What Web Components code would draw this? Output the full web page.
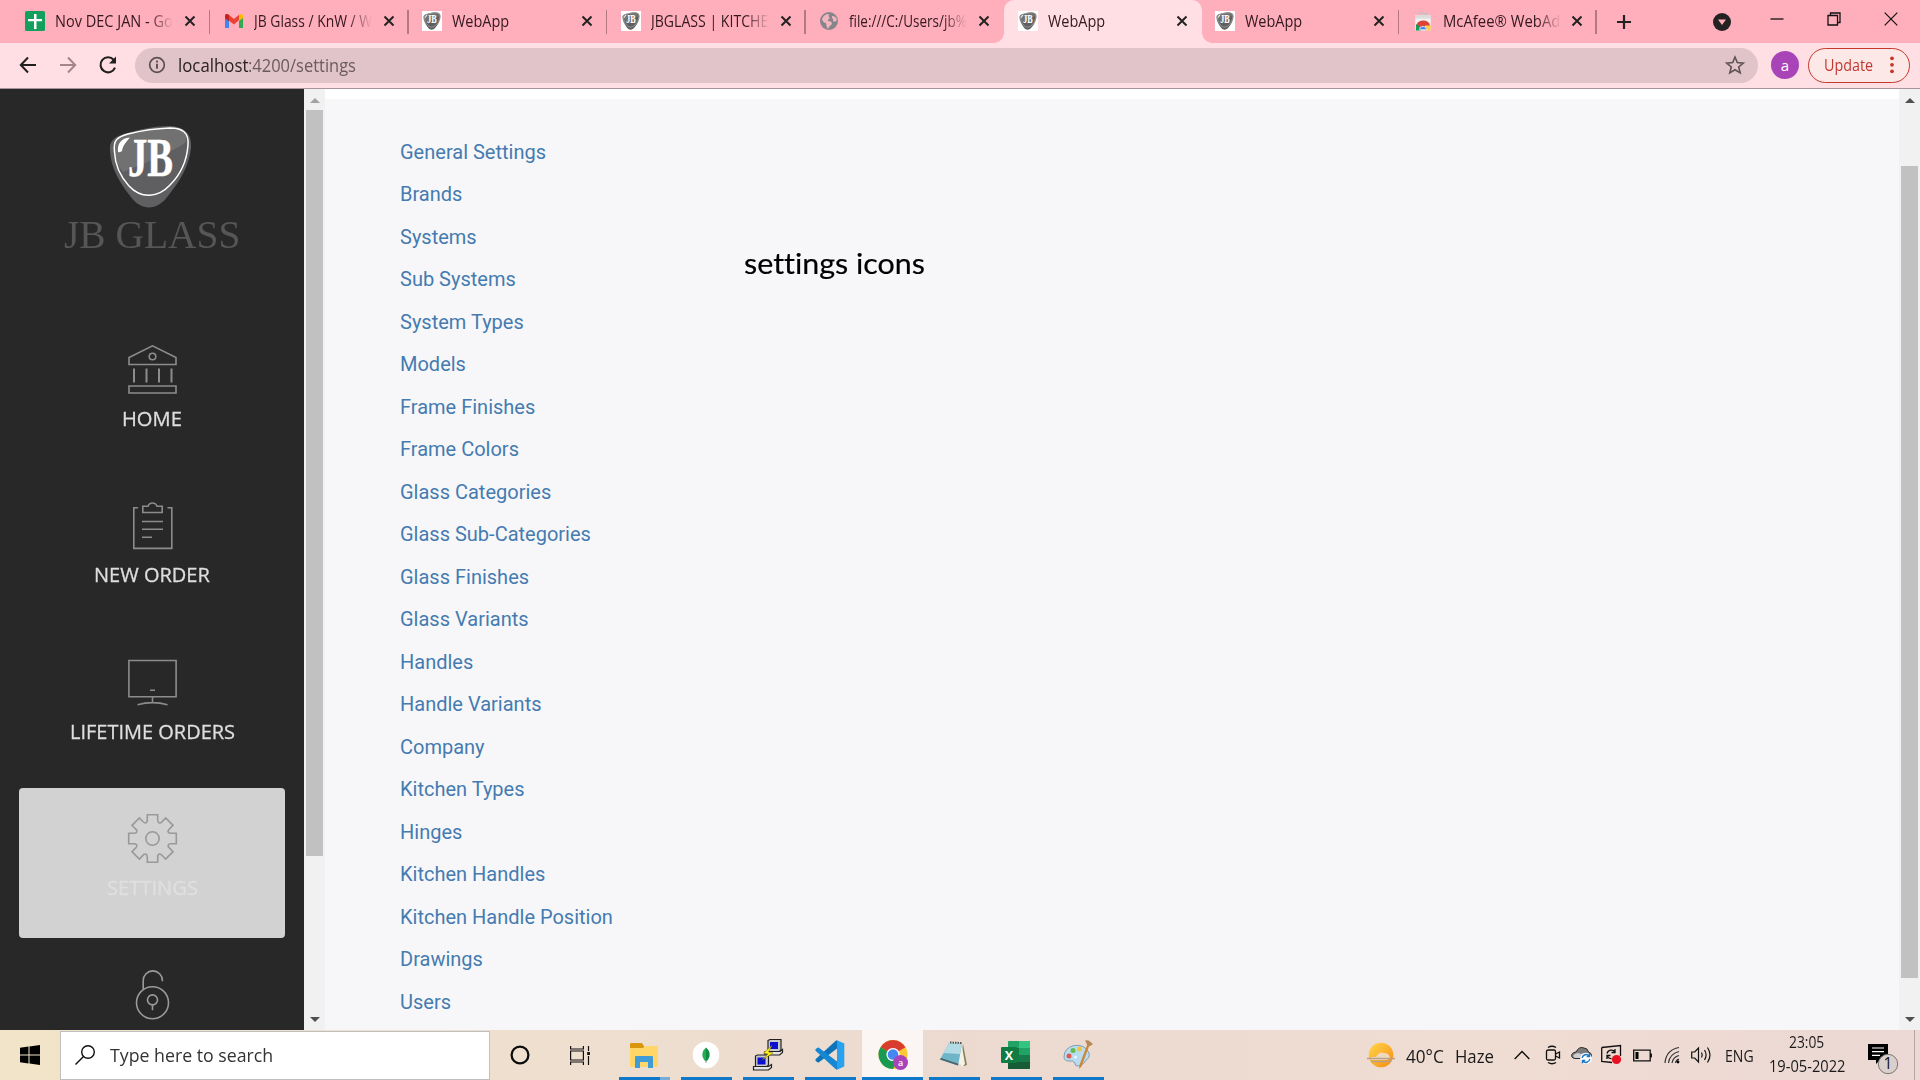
<!DOCTYPE html>
<html lang="en">
<head>
<meta charset="utf-8">
<title>WebApp</title>
<style>
html,body{margin:0;height:100%;overflow:hidden;background:#f7f7f9}
</style>
</head>
<body>
<desk-screen></desk-screen>
<script>
const SHIELD = `<path d="M0 25C-1 15 4 11 14 8C30 3 45 0 60 0C76 1 82 9 81 22C79 40 70 55 58 70C48 84 32 86 21 71C9 56 1 42 0 25Z" fill="#5f5f61"/>
<path d="M4 26C3 14 6 11 18 8C32 5 45 3 60 3C74 3 79 9 75 17C60 27 38 36 13 46C8 40 5 33 4 26Z" fill="#717171"/>
<path d="M4.500 26C3 14 7 11 18 8C32 4.500 45 2.500 60 2C73 2 79 7 78 19C77 33 72 47 60 59C48 72 31 73 19 60C10 50 5 38 4.500 26Z" fill="none" stroke="#fff" stroke-width="1.500"/>
<path d="M8 26C7 18 11 12 20 11.500C17 15 13 19 12 25Q9 27 8 26Z" fill="#fff"/>
<text x="18" y="50" font-family="Liberation Serif,serif" font-weight="700" font-size="54" fill="#fff" stroke="#fff" stroke-width=".500" textLength="45" lengthAdjust="spacingAndGlyphs">JB</text>`;
const gear = () => {
  let d = '';
  for (let i = 0; i < 8; i++) {
    const a = i * Math.PI / 4, r = (x, y) => (x * Math.cos(a) - y * Math.sin(a)).toFixed(2) + ' ' + (x * Math.sin(a) + y * Math.cos(a)).toFixed(2);
    d += (i ? 'L' : 'M') + r(-5.2, -18.5) + 'L' + r(-5.2, -23.8) + 'L' + r(5.2, -23.8) + 'L' + r(5.2, -18.5) + 'C' + r(5.4, -15) + ' ' + r(7.4, -14.8) + ' ' + r(9.4, -16.8);
  }
  return d + 'Z';
};
const CHROME = `<circle cx="15" cy="15" r="14.500" fill="#fcc934"/><path d="M15 15L2.500 7.700A14.500 14.500 0 0 1 27.500 7.700Z" fill="#d93d30"/><path d="M15 15L2.500 7.700A14.500 14.500 0 0 0 15 29.500L21 18.500Z" fill="#199a50"/><circle cx="15" cy="15" r="6.600" fill="#fff"/><circle cx="15" cy="15" r="5.300" fill="#4688f1"/>`;
/* name: [width, height, markup] */
const ICONS = {
  sheets: [20,20,`<rect width="20" height="20" rx="1.500" fill="#14a05c"/><path d="M9 3h2.500v5H17v2.300h-5.500V18H9v-7.700H3V8h6z" fill="#fff"/>`],
  gmail: [20,20,`<path d="M1 17V5l4 3v9z" fill="#4285f4"/><path d="M15 17V8l4-3v12z" fill="#34a853"/><path d="M1 7V4.500Q2 2 4.500 3.500L10 8l5-4.200V9l-5 4.500L5 9.800z" fill="#ea4335"/><path d="M15 3.800Q18 1.800 19 4.500V7l-4 3z" fill="#fbbc04"/><path d="M1 4.500v2.700l4 3V4Q2 2 1 4.500z" fill="#c5221f"/>`],
  shield: [20,20,`<rect width="20" height="20" fill="#fff"/><g transform="translate(1.500 1.200) scale(.21 .215)">${SHIELD}</g>`],
  globe: [20,20,`<circle cx="10" cy="10" r="9" fill="#85868a"/><path d="M3 8Q5 3 10 3Q9 6 11 7Q8 9 9 10Q13 10 13 13Q10 15 9 18Q7 15 7 12Q4 12 3 8ZM13 5Q17 5 18 9Q16 12 14 10Q15 8 13 7Z" fill="#f3b3bf"/>`],
  store: [20,20,`<path d="M2 5h16l-.500 14.500h-15z" fill="#f2f2f2"/><path d="M6.500 4.500V2h7v2.500" fill="none" stroke="#c9c0c2" stroke-width="1.500"/><path d="M2 4h16v3.500H2z" fill="#dcdcdc"/><path d="M3 16Q3.500 9.500 10 9.500t7 5.500l-7 2z" fill="#db4437"/><path d="M3 13.500Q4 13 5.500 14.500l2.500 5H3z" fill="#0f9d58"/><path d="M12 14.500h5.500v5H12z" fill="#ffcd40"/><path d="M6.500 18.800a3.500 3.500 0 0 1 7 0z" fill="#4285f4" stroke="#eee" stroke-width=".800"/>`],
  x: [12,12,`<path d="M1.500 1.500l9 9M10.500 1.500l-9 9" stroke="#222" stroke-width="2"/>`],
  plus: [16,16,`<path d="M8 1v14M1 8h14" stroke="#222" stroke-width="2.200"/>`],
  drop: [18,18,`<circle cx="9" cy="9" r="9" fill="#242122"/><path d="M5 6.500h8L9 12z" fill="#ffaebb"/>`],
  min: [14,20,`<path d="M.500 10h13" stroke="#111" stroke-width="1.300"/>`],
  restore: [14,14,`<path d="M1 3.500h9.500v9.500H1zM3.500 3.500V1H13v9.500h-2.500" fill="none" stroke="#111" stroke-width="1.300"/>`],
  close: [14,14,`<path d="M.700 .700l12.600 12.600M13.300 .700L.700 13.300" stroke="#111" stroke-width="1.200"/>`],
  back: [18,18,`<path d="M17 9H2M9 1.500L1.800 9 9 16.500" fill="none" stroke="#221f20" stroke-width="2"/>`],
  fwd: [18,18,`<path d="M1 9h15M9 1.500L16.200 9 9 16.500" fill="none" stroke="#a3868d" stroke-width="2"/>`],
  reload: [20,20,`<path d="M15.800 5A7.500 7.500 0 1 0 17 12.600" fill="none" stroke="#221f20" stroke-width="2.100"/><path d="M18 1.500v7h-7z" fill="#221f20"/>`],
  info: [18,18,`<circle cx="9" cy="9" r="7.300" fill="none" stroke="#5b5052" stroke-width="1.700"/><path d="M9 7.800v5M9 4.500v2" stroke="#5b5052" stroke-width="1.900"/>`],
  star: [20,20,`<path d="M10 2l2.300 5.600 6 .500-4.600 3.900 1.500 5.900L10 14.700 4.800 17.900l1.500-5.900L1.700 8.100l6-.500z" fill="none" stroke="#5f5356" stroke-width="1.600"/>`],
  dots: [4,18,`<g fill="#c5392c"><circle cx="2" cy="2.300" r="1.900"/><circle cx="2" cy="8.800" r="1.900"/><circle cx="2" cy="15.300" r="1.900"/></g>`],
  logo: [82,82,SHIELD],
  home: [49,49,`<g fill="none" stroke="#8c8c8c" stroke-width="1.600"><path d="M1 19.500v-7L24.500.900 48 12.500v7zM1 41h47v7H1z"/><circle cx="24.500" cy="11.500" r="3.300"/></g><path d="M6 23.500v14M18.500 23.500v14M31 23.500v14M43.500 23.500v14" stroke="#8c8c8c" stroke-width="2"/>`],
  order: [49,49,`<g transform="translate(0 -1.200)" fill="none" stroke="#8c8c8c" stroke-width="1.600"><path d="M10 8H5.800v40.600h38V8H39.500M14.800 12.700V6.500H20A4.700 4.700 0 0 1 29 6.500h5.200v6.200zM14 21.700h21M14 29.500h21M14 37.500h10"/></g>`],
  monitor: [49,49,`<g fill="none" stroke="#8c8c8c" stroke-width="1.600"><path d="M.900 2.500h47.200v36.300H.900zM24.500 39v5M22 32.300h5M9.500 46.800Q24.500 42.500 39.500 46.800"/></g>`],
  gear: [49,49,`<g transform="translate(24.500 24.500)" fill="none" stroke="#999" stroke-width="1.600"><path d="${gear()}"/><circle r="6.700"/></g>`],
  lock: [49,49,`<g transform="translate(0 -.800)" fill="none" stroke="#9a9a9a" stroke-width="1.600"><circle cx="24.500" cy="32.500" r="16"/><path d="M15.200 19V10.300A9.600 9.600 0 0 1 34.400 10.300V11"/><circle cx="24.500" cy="29.700" r="5"/><path d="M24.500 34.700V40"/></g>`],
  win: [20,20,`<path d="M0 2.800L8.500 1.600V9.500H0zM9.500 1.400L20 0V9.500H9.500zM0 10.500H8.500V18.400L0 17.200zM9.500 10.500H20V20L9.500 18.600z"/>`],
  search: [20,20,`<circle cx="13" cy="7" r="6.300" fill="none" stroke="#111" stroke-width="1.400"/><path d="M8.500 11.500L.500 19.500" stroke="#111" stroke-width="1.500"/>`],
  cortana: [20,20,`<circle cx="10" cy="10" r="8.400" fill="none" stroke="#0c0c0c" stroke-width="2.300"/>`],
  task: [20,20,`<g fill="none" stroke="#111" stroke-width="1.200"><path d="M.600 1v3h12.800V1M.600 6h12.800v9H.600zM.600 20v-3h12.800V20M18.500 1v5M18.500 11v9"/></g><rect x="17.200" y="7" width="2.700" height="3" fill="#111"/>`],
  explorer: [28,26,`<path d="M0 2Q0 1 1 1h11l2 3v2H0z" fill="#d9960f"/><path d="M0 6h13l2-2h12q1 0 1 1v19q0 1-1 1H1q-1 0-1-1z" fill="#ffd667"/><path d="M5 26V15q0-1 1-1h16q1 0 1 1v11h-5v-6h-8v6z" fill="#409bd6"/>`],
  mongo: [28,28,`<circle cx="14" cy="14" r="13.300" fill="#fff"/><path d="M14 6.500q4.500 4 3.500 9-1 3.500-3.500 5z" fill="#0f8b43"/><path d="M14 6.500q-4.500 4-3.500 9 1 3.500 3.500 5z" fill="#23ac54"/><path d="M14 19v3" stroke="#7a8" />`],
  putty: [30,32,`<g stroke="#222" stroke-width="1.200"><path d="M15 1.500l2-1h11V11l-1.500 1.500H15z" fill="#c9c9c9"/><path d="M12 12.500h15l2.500-2v3l-3 2.500H12z" fill="#e4e4e4"/><path d="M2.500 17l2-1H15.500V26L14 27.500H2.500z" fill="#c9c9c9"/><path d="M.500 27.500h15l3-2v3l-3 2.500H.500z" fill="#e4e4e4"/></g><path d="M17 3h8v7h-8zM4.500 18.500h8v7h-8z" fill="#0a0fd0"/><path d="M19 6.500L10.500 14l4.500 1-6 6 11-7-4.500-1z" fill="#ffee18" stroke="#7a7000" stroke-width=".500"/>`],
  vscode: [30,30,`<path d="M22 .300L29.300 3.500v23L22 29.700z" fill="#27a2ee"/><path d="M22 .300V8.500L4 22.300Q3 22.800 2 22L.700 20.700Q0 19.800.800 19L20.500 1Q21.200.400 22 .300z" fill="#0e73b9"/><path d="M22 29.700V21.500L4 7.700Q3 7.200 2 8L.700 9.300Q0 10.200.800 11L20.500 29Q21.200 29.600 22 29.700z" fill="#1688d3"/>`],
  chrome: [30,32,`<g transform="translate(0 .500)">${CHROME}</g><circle cx="22.500" cy="23.500" r="7.500" fill="#a944b8"/><text x="22.500" y="27" text-anchor="middle" font-family="Open Sans,sans-serif" font-size="9" font-weight="600" fill="#fff">a</text>`],
  notepad: [30,30,`<path d="M24 4l4 21-3 1-4-1z" fill="#8b8257"/><path d="M22.500 4l3.500 20-3 3-3-4z" fill="#f4f3e7"/><path d="M10 3l13 .500L19 25.500 1 19.500z" fill="#6fb5c9"/><path d="M10 3l13 .500L21 14 4.500 13z" fill="#b3dbe5"/><path d="M1 19.500l18 6 .300-1.800L2 18z" fill="#48656c"/><path d="M11 2.500l12 .500" stroke="#555" stroke-width="2" stroke-dasharray="1.500 1"/>`],
  excel: [30,30,`<rect x="7" y="1" width="22" height="28" rx="1" fill="#21a366"/><path d="M18 1h10q1 0 1 1v6H18z" fill="#33c481"/><path d="M7 8h11v7H7z" fill="#107c41"/><path d="M7 15h11v14H8q-1 0-1-1zM18 15h11v7H18z" fill="#18794a"/><path d="M7 22h22v6q0 1-1 1H8q-1 0-1-1z" fill="#185c37"/><rect y="7" width="16" height="16" rx="1" fill="#107c41"/><text x="8" y="19.500" text-anchor="middle" font-family="Open Sans,sans-serif" font-size="12.500" font-weight="700" fill="#fff">X</text>`],
  paint: [30,30,`<path d="M1 17Q1 8 11 5.500Q22 4 26 13Q27 18 23 20Q20 26 14 26Q12 26 12 23Q10 20 6 21Q1 21 1 17Z" fill="#b8dcf0" stroke="#7f9fb5"/><circle cx="6" cy="16" r="2.500" fill="#e2574f"/><circle cx="10" cy="10.500" r="2.500" fill="#6ab94c"/><circle cx="16.500" cy="9" r="2.500" fill="#f5c43e"/><circle cx="12.500" cy="17" r="1.500" fill="#eef7fc"/><path d="M26.500 5l-8 21.500-2.500 2.500.500-4L24.500 4z" fill="#cf8430"/><path d="M22 .500q3-1 5 1l3 2.500q-2 2-5 2.500z" fill="#b58a59"/>`],
  sun: [30,28,`<defs><linearGradient id="s" x2="1" y2="1"><stop stop-color="#ffd84a"/><stop offset="1" stop-color="#f78b14"/></linearGradient></defs><circle cx="15" cy="14" r="12.300" fill="url(#s)"/><path d="M3 18q3-3 7-2 3-6 8-4 5 0 6 5l-3 2H6z" fill="#efd9bd"/><path d="M1 17.500h28M5 20.500h20" stroke="#b8a18b" stroke-width="1.300"/>`],
  chev: [16,10,`<path d="M.700 9L8 1.500 15.300 9" fill="none" stroke="#111" stroke-width="1.400"/>`],
  meet: [16,20,`<g fill="none" stroke="#111" stroke-width="1.300"><rect x="1.500" y="5" width="9" height="10" rx="1.500"/><path d="M10.500 9l4-2v6l-4-2M3 2.500Q7 0 11 2.500M3 17.500Q7 20 11 17.500"/></g>`],
  cloud: [22,20,`<path d="M4 13.500Q0 13 .800 9.500 2 7 5 7 8 1 13 3q3.500 0 4.500 4 3 1 3 3.500 0 3-3.500 3z" fill="#7b7b7b" stroke="#2a2a2a"/><path d="M1.800 11q4-5 8-2 4-2 9 1l-1 3H4z" fill="#cfcfcf"/><circle cx="15" cy="13.500" r="5.800" fill="#fff"/><path d="M11.200 13a4 4 0 0 1 7-2M18.800 14a4 4 0 0 1-7 2M18.500 8.700v2.800h-2.800M11.500 18.300v-2.800h2.800" fill="none" stroke="#1976c9" stroke-width="1.400"/>`],
  sync: [22,22,`<path d="M.700 3.500L19.500 1.500V12M11 18.500L.700 17.500V3.500" fill="none" stroke="#111" stroke-width="1.300"/><path d="M6 9.500a4.500 4.500 0 0 1 8-1.500M14 5v3.500h-3.500M6 15v-3.500h3.500M6.500 12.500a4 4 0 0 0 4 2" fill="none" stroke="#111" stroke-width="1.300"/><circle cx="15.500" cy="15.500" r="4.600" fill="#e81123"/>`],
  batt: [19,13,`<path d="M.700 1.200h16.500v10.600H.700zM18.300 4.500v4" fill="none" stroke="#111" stroke-width="1.300"/><path d="M2.500 3h3v7h-3z"/>`],
  wifi: [17,18,`<g fill="none" stroke="#333" stroke-width="1.200"><path d="M1 17Q2 4 15 1.500M4.500 17Q5.500 8 15 5.500M8 17Q9 11 15 9.500M11.500 17Q12 14 15 13.200"/></g><circle cx="14" cy="16" r="1.400"/>`],
  vol: [21,18,`<g fill="none" stroke="#111" stroke-width="1.200"><path d="M.700 6h3L7.500 2v14l-3.800-4h-3zM10.500 6.500q1.500 2.500 0 5M13.500 4q3.200 5 0 10M16.500 1.500q5 7.500 0 15"/></g>`],
  notif: [31,32,`<path d="M0 1h20v16h-8l-4 4v-4H0z"/><path d="M4 5h12M4 8.700h12M4 12.400h8" stroke="#fff" stroke-width="1.200"/><circle cx="20" cy="21" r="9.700" fill="#d9cfcc" stroke="#7a7575"/><text x="20" y="26.300" text-anchor="middle" font-family="Open Sans,sans-serif" font-size="15.500" fill="#111">1</text>`],
  up: [10,5,`<path d="M0 5L5 0l5 5z" fill="currentColor"/>`],
  down: [10,5,`<path d="M0 0h10L5 5z" fill="currentColor"/>`]
};
const define = (name, html, after) => customElements.define(name, class extends HTMLElement {
  connectedCallback() {
    if (this.shadowRoot) return;
    const t = document.createElement('template');
    t.innerHTML = typeof html === 'function' ? html(this) : html;
    this.attachShadow({ mode: 'open' }).append(t.content.cloneNode(true));
    if (after) after(this);
  }
});

define('ui-icon', el => {
  const [w, h, m] = ICONS[el.getAttribute('name')];
  return `<style>:host{display:block;flex:none;width:${w}px;height:${h}px}svg{display:block;overflow:visible}</style><svg width="${w}" height="${h}" viewBox="0 0 ${w} ${h}">${m}</svg>`;
});

/* A single line of text condensed or stretched to the width in its w attribute. */
define('fit-text', el => `<style>:host{display:block;flex:none;width:${el.getAttribute('w')}px;white-space:nowrap}span{display:inline-block;transform-origin:0 50%}</style><span>${el.getAttribute('text')}</span>`,
  el => {
    const s = el.shadowRoot.querySelector('span');
    s.style.transform = `scaleX(${(+el.getAttribute('w') / s.offsetWidth).toFixed(4)})`;
  });

define('browser-tab', el => {
  const on = el.hasAttribute('active');
  return `<style>
:host{display:flex;flex:none;align-items:center;box-sizing:border-box;width:198.500px;height:43px;padding:0 0 1px 13.500px;position:relative;font:16px/24px "Open Sans",sans-serif;color:#33191f;${on ? 'background:#ffdfe4;border-radius:10px 10px 0 0;z-index:1;' : ''}}
:host([short]){width:197.500px}
.t{flex:none;width:118px;margin-left:10px;overflow:hidden;${el.hasAttribute('cut') ? '-webkit-mask-image:linear-gradient(90deg,#000 80%,transparent);mask-image:linear-gradient(90deg,#000 80%,transparent)' : ''}}
.x{margin-left:11px}
:host([short]) .x{margin-left:10px}
${on ? `:host::before,:host::after{content:"";position:absolute;bottom:0;width:10px;height:10px}
:host::before{left:-10px;background:radial-gradient(circle at 0 0,transparent 9.500px,#ffdfe4 10px)}
:host::after{right:-10px;background:radial-gradient(circle at 100% 0,transparent 9.500px,#ffdfe4 10px)}` : ''}
${el.hasAttribute('sep') ? `:host::after{content:"";position:absolute;right:0;top:10px;width:1.500px;height:24px;background:#b27983}` : ''}
</style><ui-icon name="${el.getAttribute('icon')}"></ui-icon><div class="t"><fit-text w="${el.getAttribute('w')}" text="${el.getAttribute('label')}"></fit-text></div><ui-icon class="x" name="x"></ui-icon>`;
});

define('tab-strip', `<style>:host{display:flex;height:43px;flex:none;align-items:center;background:#ffaebb;padding-left:11.500px;box-sizing:border-box}
.plus{margin-left:19.500px}.drop{margin-left:81px}.min{margin-left:39px;margin-bottom:5px}.res,.cl{margin:0 0 5px 43px}</style>
<browser-tab sep cut icon="sheets" label="Nov DEC JAN - Go" w="118"></browser-tab>
<browser-tab sep cut icon="gmail" label="JB Glass / KnW / W" w="118"></browser-tab>
<browser-tab sep icon="shield" label="WebApp" w="57"></browser-tab>
<browser-tab sep cut icon="shield" label="JBGLASS | KITCHE" w="117"></browser-tab>
<browser-tab cut icon="globe" label="file:///C:/Users/jb%" w="118"></browser-tab>
<browser-tab active short icon="shield" label="WebApp" w="57"></browser-tab>
<browser-tab sep short icon="shield" label="WebApp" w="57"></browser-tab>
<browser-tab sep short cut icon="store" label="McAfee® WebAd" w="117"></browser-tab>
<ui-icon class="plus" name="plus"></ui-icon><ui-icon class="drop" name="drop"></ui-icon><ui-icon class="min" name="min"></ui-icon><ui-icon class="res" name="restore"></ui-icon><ui-icon class="cl" name="close"></ui-icon>`);

define('tool-bar', `<style>:host{display:flex;flex:none;align-items:center;height:46px;box-sizing:border-box;background:#ffdfe4;border-bottom:1px solid #a8959a;padding:0 10px 1px 19px;font-family:"Open Sans",sans-serif}
.f{margin-left:22px}.r{margin-left:21px}
.omni{display:flex;align-items:center;box-sizing:border-box;width:1623px;height:35px;margin-left:17px;border-radius:18px;background:#e0c4c9;padding:0 13px;font-size:18px;line-height:26px}
.u1{margin-left:12px;color:#2b2224}.u2{color:#6b5b5e}.star{margin-left:auto}
.av{display:flex;align-items:center;justify-content:center;width:28px;height:28px;border-radius:50%;background:#a944b8;color:#fff;margin-left:13px;font-size:15px;line-height:20px}
.up{display:flex;align-items:center;box-sizing:border-box;width:102px;height:35px;margin-left:9px;border:1.500px solid #c5392c;border-radius:18px;background:#fde8e8;color:#c0392f;padding:0 14px 0 15px;font-size:15.500px;line-height:20px}
.up fit-text{margin-bottom:1px}
.d{margin-left:17px}</style>
<ui-icon name="back"></ui-icon><ui-icon class="f" name="fwd"></ui-icon><ui-icon class="r" name="reload"></ui-icon>
<div class="omni"><ui-icon name="info"></ui-icon><fit-text class="u1" w="70" text="localhost"></fit-text><fit-text class="u2" w="108" text=":4200/settings"></fit-text><ui-icon class="star" name="star"></ui-icon></div>
<div class="av">a</div><div class="up"><fit-text w="49" text="Update"></fit-text><ui-icon class="d" name="dots"></ui-icon></div>`);

define('scroll-bar', el => `<style>:host{display:flex;flex:none;flex-direction:column;align-items:center;box-sizing:border-box;width:21px;padding:9px 0 8px;background:#f1f1f1;color:#505050}
.th{width:17px;background:#c1c1c1;height:${el.getAttribute('size')}px;margin-top:${el.getAttribute('start')}px;margin-bottom:auto}
.u{color:${el.getAttribute('upcolor') || '#505050'}}</style><ui-icon class="u" name="up"></ui-icon><div class="th"></div><ui-icon name="down"></ui-icon>`);

define('nav-item', el => `<style>:host{display:flex;flex:none;flex-direction:column;align-items:center;box-sizing:border-box;height:150px;margin:0 19px 6.400px;padding:26px 0 0 1px;border-radius:4px;font:500 19.500px/26px "Open Sans",sans-serif;color:#dedede;-webkit-text-stroke:.3px}
:host([active]){background:#d2d2d2;color:#dfdfdf}
fit-text{margin:12px 1px 0 0}</style><ui-icon name="${el.getAttribute('icon')}"></ui-icon>${el.hasAttribute('label') ? `<fit-text w="${el.getAttribute('w')}" text="${el.getAttribute('label')}"></fit-text>` : ''}`);

define('side-nav', `<style>:host{display:flex;flex:none;flex-direction:column;width:304px;overflow:hidden;background:#282828}
.brand{display:flex;flex-direction:column;align-items:center;height:230px;box-sizing:border-box;padding-top:37px;flex:none}
.brand ui-icon{margin-right:2px}
.name{font:39px/44px "Liberation Serif",serif;color:#565656;margin:5px 1px 0 0}</style>
<div class="brand"><ui-icon name="logo"></ui-icon><fit-text class="name" w="176" text="JB GLASS"></fit-text></div>
<nav-item icon="home" label="HOME" w="60"></nav-item><nav-item icon="order" label="NEW ORDER" w="116"></nav-item><nav-item icon="monitor" label="LIFETIME ORDERS" w="165"></nav-item><nav-item active icon="gear" label="SETTINGS" w="91"></nav-item><nav-item icon="lock"></nav-item>`);

const LINKS = ['General Settings','Brands','Systems','Sub Systems','System Types','Models','Frame Finishes','Frame Colors','Glass Categories','Glass Sub-Categories','Glass Finishes','Glass Variants','Handles','Handle Variants','Company','Kitchen Types','Hinges','Kitchen Handles','Kitchen Handle Position','Drawings','Users'];
define('settings-page', `<style>:host{display:flex;flex:1;min-width:0;box-sizing:border-box;border-top:10px solid #fff;background:#f7f7f9;padding:32px 0 0 75px;overflow:hidden}
ul{list-style:none;margin:0;padding:0;width:344px;font:20px/42.490px Roboto,sans-serif}
li{height:42.490px}a{color:#457bb0;text-decoration:none}
.note{font:29.500px/36px Lato,sans-serif;font-variant-ligatures:none;color:#000;margin-top:114px;-webkit-text-stroke:.2px}</style>
<ul>${LINKS.map(l => `<li><a>${l}</a></li>`).join('')}</ul><fit-text class="note" w="180.500" text="settings icons"></fit-text>`);

define('task-app', el => `<style>:host{display:flex;flex:none;align-items:center;justify-content:center;box-sizing:border-box;width:51px;height:50px;margin-left:11px;border-bottom:3px solid #0f78c8;padding:2px 1px 0 0}
:host([active]){width:61px;background:#fbf6f3;margin:0 -5px 0 6px;padding-right:0}
:host([multi]){border-image:linear-gradient(90deg,#0f78c8 80%,#75addb 80%) 1;border-width:0 0 3px}</style><ui-icon name="${el.getAttribute('icon')}"></ui-icon>`);

define('task-bar', `<style>:host{display:flex;flex:none;align-items:center;height:50px;background:linear-gradient(90deg,#f1e4c8,#eedfcf 30%,#ecdad0 50%,#efdcd2 78%,#ecd8d4);font:18.500px/26px "Open Sans",sans-serif;color:#1a1a1a}
.st{margin-left:20px}
.box{display:flex;flex:none;align-items:center;box-sizing:border-box;width:430px;height:49px;border:1px solid #bfbfc2;background:#fff;margin-left:20px;padding-left:14px;color:#333}
.ph{margin-left:15px}.co{margin-left:20px}.tv{margin:0 18px 0 40px}
.clock{display:flex;flex-direction:column;align-items:center;font-size:15.800px;line-height:23.500px;margin:0 0 1px 15px}
.clock :first-child{margin-right:1px}
.edge{width:1px;height:50px;background:#b5a6a3;margin-left:15px}</style>
<ui-icon class="st" name="win"></ui-icon>
<div class="box"><ui-icon name="search"></ui-icon><fit-text class="ph" w="163" text="Type here to search"></fit-text></div>
<ui-icon class="co" name="cortana"></ui-icon><ui-icon class="tv" name="task"></ui-icon>
<task-app multi icon="explorer"></task-app><task-app icon="mongo"></task-app><task-app icon="putty"></task-app><task-app icon="vscode"></task-app><task-app active icon="chrome"></task-app><task-app icon="notepad"></task-app><task-app icon="excel"></task-app><task-app icon="paint"></task-app>
<ui-icon name="sun" style="margin-left:262px"></ui-icon>
<fit-text w="38" text="40°C" style="margin:2px 0 0 10px"></fit-text><fit-text w="39" text="Haze" style="margin:2px 0 0 11px"></fit-text>
<ui-icon name="chev" style="margin-left:20px"></ui-icon><ui-icon name="meet" style="margin-left:15px"></ui-icon><ui-icon name="cloud" style="margin-left:10px"></ui-icon><ui-icon name="sync" style="margin-left:8px"></ui-icon><ui-icon name="batt" style="margin-left:10px;margin-top:1px"></ui-icon><ui-icon name="wifi" style="margin-left:12px"></ui-icon><ui-icon name="vol" style="margin-left:10px"></ui-icon>
<fit-text w="29" text="ENG" style="font-size:16.5px;margin:1px 0 0 13px"></fit-text>
<div class="clock"><fit-text w="35" text="23:05"></fit-text><fit-text w="76" text="19-05-2022"></fit-text></div>
<ui-icon name="notif" style="margin:8px 0 0 23px"></ui-icon><div class="edge"></div>`);

define('desk-screen', `<style>:host{display:flex;flex-direction:column;width:1920px;height:1080px;overflow:hidden}
main{display:flex;flex:1;min-height:0}</style>
<tab-strip></tab-strip><tool-bar></tool-bar>
<main><side-nav></side-nav><scroll-bar start="7" size="746" upcolor="#a3a3a3"></scroll-bar><settings-page></settings-page><scroll-bar start="63" size="812"></scroll-bar></main>
<task-bar></task-bar>`);
</script>
</body>
</html>
